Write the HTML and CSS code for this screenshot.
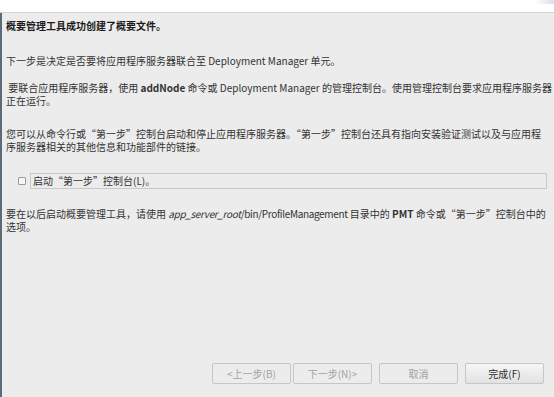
FILE: index.html
```html
<!DOCTYPE html>
<html lang="zh-CN">
<head>
    <meta charset="UTF-8">
    <link rel="stylesheet" href="styles.css">
    <title>概要管理工具</title>
</head>
<body>
<div class="banner">
    <div class="bannerGlow"></div>
</div>
<div class="wizard">
    <div class="content">
        <p class="title">概要管理工具成功创建了概要文件。</p>
        <p class="para first">下一步是决定是否要将应用程序服务器联合至 Deployment Manager 单元。</p>
        <p class="para">&nbsp;要联合应用程序服务器，使用 <b>addNode</b> 命令或 Deployment Manager 的管理控制台。使用管理控制台要求应用程序服务器<br>正在运行。</p>
        <p class="para gap">您可以从命令行或“第一步”控制台启动和停止应用程序服务器。“第一步”控制台还具有指向安装验证测试以及与应用程<br>序服务器相关的其他信息和功能部件的链接。</p>
        <div class="checkRow">
            <span class="checkBox"></span>
            <label class="checkField">启动“第一步”控制台(L)。</label>
        </div>
        <p class="para">要在以后启动概要管理工具，请使用 <span class="path"><i>app_server_root</i>/bin/ProfileManagement</span> 目录中的 <b>PMT</b> 命令或“第一步”控制台中的<br>选项。</p>
    </div>
    <div class="buttons">
        <button class="btn" disabled>&lt;上一步(B)</button>
        <button class="btn next" disabled>下一步(N)&gt;</button>
        <button class="btn cancel" disabled>取消</button>
        <button class="btn finish">完成(F)</button>
    </div>
</div>
</body>
</html>
```

FILE: styles.css
```css
html, body {
    margin: 0;
    height: 100%;
}

body {
    background-color: #ececec;
    font-family: "Noto Sans CJK SC", "DejaVu Sans", sans-serif;
    font-size: 10px;
    color: #333333;
    display: flex;
    flex-direction: column;
}

.banner {
    height: 12px;
    background-color: #ffffff;
    border-bottom: 1px solid #d4d4d4;
    display: flex;
    justify-content: flex-end;
}

.bannerGlow {
    width: 20px;
    height: 4px;
    background: linear-gradient(to right, #ffffff, #d9e0ee);
}

.wizard {
    flex: 1;
    border-left: 2px solid #5b6b78;
    padding: 0 7px 13px 4px;
    display: flex;
    flex-direction: column;
}

.content {
    flex: 1;
}

.title {
    font-weight: bold;
    color: #1c1c1c;
    margin: 6px 0 0 0;
    line-height: 14px;
}

.para {
    margin: 0;
    line-height: 13px;
    white-space: nowrap;
}

.para.first {
    margin-top: 21px;
    margin-bottom: 14px;
}

.para.gap {
    margin-top: 20px;
}

.path {
    letter-spacing: -0.35px;
}

.checkRow {
    display: flex;
    align-items: center;
    margin: 20px 0 18px 0;
}

.checkBox {
    width: 6px;
    height: 6px;
    border: 1px solid #9a9a9a;
    border-radius: 1px;
    background-color: #f6f6f6;
    margin: 0 4px 0 12px;
}

.checkField {
    flex: 1;
    height: 14px;
    line-height: 14px;
    border: 1px solid #c9c9c9;
    padding-left: 2px;
}

.buttons {
    display: flex;
    justify-content: flex-end;
    gap: 2px;
    padding-right: 3px;
}

.btn {
    width: 79px;
    height: 21px;
    border: 1px solid #c6c6c6;
    border-radius: 2px;
    background-color: #ececec;
    font-family: "Noto Sans CJK SC", "DejaVu Sans", sans-serif;
    font-size: 10px;
    color: #a2a2a2;
    padding: 0;
}

.cancel {
    margin-left: 5px;
}

.finish {
    margin-left: 5px;
    color: #2b2b2b;
    background: linear-gradient(#f6f6f6, #e2e2e2);
}
```
